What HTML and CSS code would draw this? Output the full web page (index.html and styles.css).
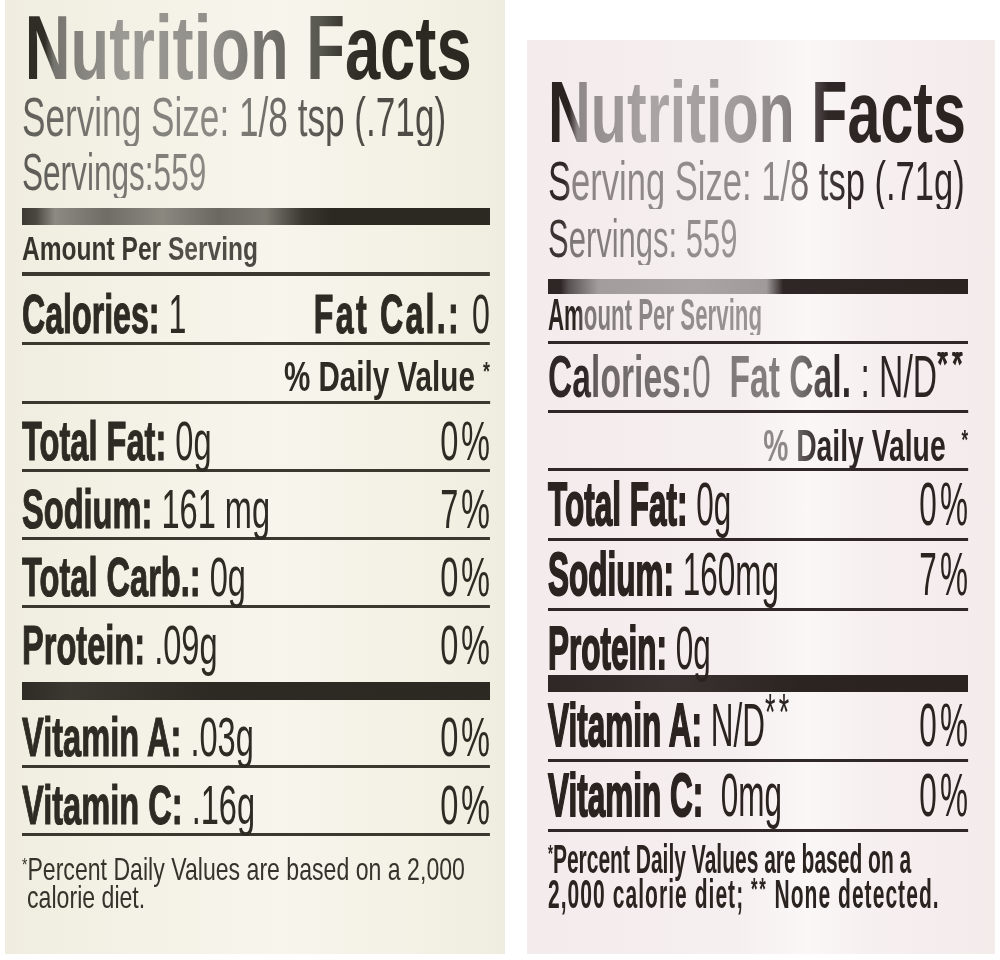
FILE: index.html
```html
<!DOCTYPE html>
<html lang="en">
<head>
<meta charset="utf-8">
<title>Nutrition Facts</title>
<link rel="stylesheet" href="styles.css">
</head>
<body>
<div class="page">
  <section class="label left">
    <h1 class="r title"><span class="gt">Nutrition Facts</span></h1>
    <p class="r serv"><span class="gt">Serving Size: 1/8 tsp (.71g)</span></p>
    <p class="r servs"><span class="gt">Servings:559</span></p>
    <div class="bar"></div>
    <p class="r amount"><span class="gt">Amount Per Serving</span></p>
    <div class="r cal"><span><b>Calories:</b> 1</span><span class="fatcal"><b>Fat Cal.:</b> 0</span></div>
    <div class="r dv"><b>% Daily Value <span class="ast">*</span></b></div>
    <div class="r nut"><span><b>Total Fat:</b> 0g</span><span class="pct">0%</span></div>
    <div class="r nut"><span><b>Sodium:</b> 161 mg</span><span class="pct">7%</span></div>
    <div class="r nut"><span><b>Total Carb.:</b> 0g</span><span class="pct">0%</span></div>
    <div class="r nut prot"><span><b>Protein:</b> .09g</span><span class="pct">0%</span></div>
    <div class="bar bar2"></div>
    <div class="r nut"><span><b>Vitamin A:</b> .03g</span><span class="pct">0%</span></div>
    <div class="r nut"><span><b>Vitamin C:</b> .16g</span><span class="pct">0%</span></div>
    <p class="r foot"><span class="ast">*</span>Percent Daily Values are based on a 2,000<br>calorie diet.</p>
  </section>

  <section class="label right">
    <h1 class="r title"><span class="gt">Nutrition Facts</span></h1>
    <p class="r serv"><span class="gt">Serving Size: 1/8 tsp (.71g)</span></p>
    <p class="r servs"><span class="gt">Servings: 559</span></p>
    <div class="bar"></div>
    <p class="r amount"><span class="gt">Amount Per Serving</span></p>
    <div class="r cal"><span class="gt"><b>Calories:</b>0  <b>Fat Cal.</b> : N/D<b class="ast2">**</b></span></div>
    <div class="r dv"><span class="gt"><b>% Daily Value  <span class="ast">*</span></b></span></div>
    <div class="r nut"><span><b>Total Fat:</b> 0g</span><span class="pct">0%</span></div>
    <div class="r nut"><span><b>Sodium:</b> 160mg</span><span class="pct">7%</span></div>
    <div class="r nut prot"><span><b>Protein:</b> 0g</span></div>
    <div class="bar bar2"></div>
    <div class="r nut"><span><b>Vitamin A:</b> N/D<b class="ast2">**</b></span><span class="pct">0%</span></div>
    <div class="r nut"><span><b>Vitamin C:</b>  0mg</span><span class="pct">0%</span></div>
    <p class="r foot"><span class="ast">*</span>Percent Daily Values are based on a<br><span class="wide">2,000 calorie diet; <span class="ast3">**</span> None detected.</span></p>
  </section>
</div>
</body>
</html>
```

FILE: styles.css
```css
html, body {
  margin: 0;
  padding: 0;
  background: #ffffff;
}

body {
  font-family: "Liberation Sans", Arial, sans-serif;
}

.page {
  display: flex;
  align-items: flex-start;
  width: 1000px;
  height: 960px;
}

.label {
  box-sizing: border-box;
  overflow: hidden;
  display: flex;
  flex-direction: column;
}

.left {
  margin-left: 5px;
  width: 500px;
  height: 954px;
  padding: 8px 15px 0 17px;
  background: linear-gradient(90deg, #f0ede0 0%, #f5f3e8 35%, #f7f5ec 55%, #f3f0e4 85%, #efece0 100%);
  color: #2d2b23;
}

.right {
  margin-left: 22px;
  margin-top: 40px;
  width: 468px;
  height: 914px;
  padding: 37px 27px 0 21px;
  background: linear-gradient(90deg, #f4ecec 0%, #f6efef 45%, #fbf7f7 60%, #f7f0f0 72%, #f4ebeb 100%);
  color: #2a2320;
}

/* each row is condensed horizontally to mimic the condensed label face */
.r {
  box-sizing: border-box;
  width: calc(100% / var(--sx));
  transform: scaleX(var(--sx));
  transform-origin: 0 0;
  margin: 0;
  white-space: pre;
  flex: none;
}

.gt {
  display: inline-block;
  -webkit-background-clip: text;
  background-clip: text;
  color: transparent;
}

b { font-weight: 700; }

.title {
  font-weight: 700;
  font-size: 91px;
  line-height: 80px;
}

.cal, .nut {
  display: flex;
  justify-content: space-between;
  align-items: baseline;
}

.nut b {
  -webkit-text-stroke: 1.2px currentColor;
}

.ast {
  font-size: 0.6em;
  vertical-align: 0.45em;
  line-height: 0;
}

.ast2 {
  font-size: 0.85em;
  letter-spacing: 0.12em;
  vertical-align: 0.3em;
  line-height: 0;
}

.ast3 {
  font-size: 0.8em;
  letter-spacing: 0.1em;
  vertical-align: 0.25em;
  line-height: 0;
}

/* ---------- left label ---------- */
.left .title {
  --sx: 0.696;
  padding-left: 4px;
}
.left .title .gt {
  background-image: linear-gradient(90deg, #2f2d26 0%, #2f2d26 4.5%, #75746e 6.5%, #9b9a95 22%, #908f8a 42%, #6b6a64 57%, #585750 66%, #3a3932 71%, #2b2922 76%, #2b2922 100%);
}

.left .serv {
  --sx: 0.628;
  font-size: 56px;
  line-height: 58px;
}
.left .serv .gt {
  background-image: linear-gradient(90deg, #5e5d58 0%, #7c7b76 20%, #8a8984 45%, #686762 62%, #4f4e48 75%, #4a4943 100%);
}

.left .servs {
  --sx: 0.607;
  font-size: 52px;
  line-height: 52px;
}
.left .servs .gt {
  background-image: linear-gradient(90deg, #5a5954 0%, #75746f 50%, #8a8984 100%);
}

.bar {
  flex: none;
}

.left .bar {
  margin-top: 10px;
  height: 17px;
  background: linear-gradient(90deg, #3b3932 0%, #4a4840 3%, #8c8a82 7%, #6f6d65 18%, #8a887f 30%, #6a6860 42%, #7b7970 52%, #3a3831 60%, #2b2922 66%, #2b2922 100%);
}

.left .amount {
  --sx: 0.722;
  font-size: 34px;
  line-height: 47px;
  font-weight: 700;
  border-bottom: 4px solid #3a382f;
}
.left .amount .gt {
  background-image: linear-gradient(90deg, #34322b 0%, #3c3a33 55%, #55534c 70%, #4a4842 100%);
}

.left .cal {
  --sx: 0.574;
  font-size: 56px;
  line-height: 56px;
  padding-top: 10px;
  border-bottom: 3px solid #3a382f;
}
.left .cal b {
  -webkit-text-stroke: 1.2px currentColor;
}
.left .fatcal {
  letter-spacing: 0.07em;
  margin-right: -0.07em;
}

.left .dv {
  --sx: 0.705;
  font-size: 42px;
  line-height: 42px;
  padding: 11px 0 3px;
  text-align: right;
  border-bottom: 3px solid #3a382f;
}

.left .nut {
  --sx: 0.582;
  font-size: 56px;
  line-height: 56px;
  padding-top: 9px;
  border-bottom: 3px solid #3a382f;
}
.left .pct {
  letter-spacing: 0.08em;
  margin-right: -0.08em;
}
.left .nut.prot {
  border-bottom: 0;
}
.left .bar2 {
  margin-top: 9px;
  height: 18px;
  background: linear-gradient(90deg, #2e2c25 0%, #3a3830 10%, #2c2a23 40%, #2b2922 100%);
}

.left .foot {
  --sx: 0.722;
  font-size: 32px;
  line-height: 28px;
  padding-top: 19px;
  padding-left: 7px;
  text-indent: -7px;
  color: #35332b;
}

/* ---------- right label ---------- */
.right .title {
  --sx: 0.681;
  font-size: 87px;
  line-height: 70px;
}
.right .title .gt {
  background-image: linear-gradient(90deg, #2a2320 0%, #2a2320 5%, #8e8888 7%, #aaa4a4 25%, #a29c9c 45%, #8a8383 57%, #5a5353 63%, #2e2725 67%, #2a2320 100%);
}

.right .serv {
  --sx: 0.617;
  font-size: 56px;
  line-height: 56px;
  padding-top: 6px;
}
.right .serv .gt {
  background-image: linear-gradient(90deg, #2e2725 0%, #2e2725 4%, #8a8383 6%, #938c8c 35%, #8e8787 58%, #4a4341 66%, #2e2725 72%, #2e2725 100%);
}

.right .servs {
  --sx: 0.574;
  font-size: 54px;
  line-height: 54px;
  padding-top: 2px;
}
.right .servs .gt {
  background-image: linear-gradient(90deg, #3a3331 0%, #3a3331 8%, #7e7777 12%, #8f8888 60%, #9a9393 100%);
}

.right .bar {
  margin-top: 14px;
  height: 15px;
  background: linear-gradient(90deg, #2e2725 0%, #2e2725 3%, #5a5353 5%, #a29c9c 12%, #aaa4a4 35%, #a09a9a 52%, #2e2725 56%, #2a2320 100%);
}

.right .amount {
  --sx: 0.506;
  font-size: 44px;
  line-height: 40px;
  font-weight: 700;
  padding: 1px 0 6px;
  border-bottom: 3px solid #2f2826;
}
.right .amount .gt {
  background-image: linear-gradient(90deg, #2a2320 0%, #2a2320 14%, #7e7777 17%, #8f8888 50%, #9c9595 100%);
}

.right .cal {
  --sx: 0.561;
  font-size: 60px;
  line-height: 50px;
  padding: 8px 0;
  border-bottom: 3px solid #2f2826;
}
.right .cal .gt {
  background-image: linear-gradient(90deg, #2e2725 0%, #2e2725 9%, #6f6868 12%, #7f7878 40%, #858080 58%, #5e5757 64%, #2e2725 69%, #2a2320 100%);
}

.right .dv {
  --sx: 0.629;
  font-size: 45px;
  line-height: 45px;
  padding-top: 10px;
  text-align: right;
  border-bottom: 3px solid #2f2826;
}
.right .dv .gt {
  background-image: linear-gradient(90deg, #8e8888 0%, #8e8888 12%, #5a5353 20%, #2e2725 28%, #2a2320 100%);
}

.right .nut {
  --sx: 0.508;
  font-size: 62px;
  line-height: 50px;
  padding: 8px 0 9px;
  border-bottom: 3px solid #2f2826;
}
.right .nut b {
  -webkit-text-stroke: 2px currentColor;
}
.right .nut .ast2 {
  -webkit-text-stroke: 0;
  font-weight: 400;
}
.right .pct {
  letter-spacing: 0.1em;
  margin-right: -0.1em;
}
.right .nut.prot {
  padding: 12px 0 0;
  border-bottom: 0;
}
.right .bar2 {
  margin-top: 2px;
  height: 17px;
  background: linear-gradient(90deg, #2e2725 0%, #3a3230 30%, #2b2421 60%, #2a2320 100%);
}

.right .foot {
  --sx: 0.525;
  font-size: 40px;
  line-height: 35px;
  font-weight: 700;
  padding-top: 10px;
  color: #2a2320;
}
.right .wide {
  letter-spacing: 0.05em;
}
```
